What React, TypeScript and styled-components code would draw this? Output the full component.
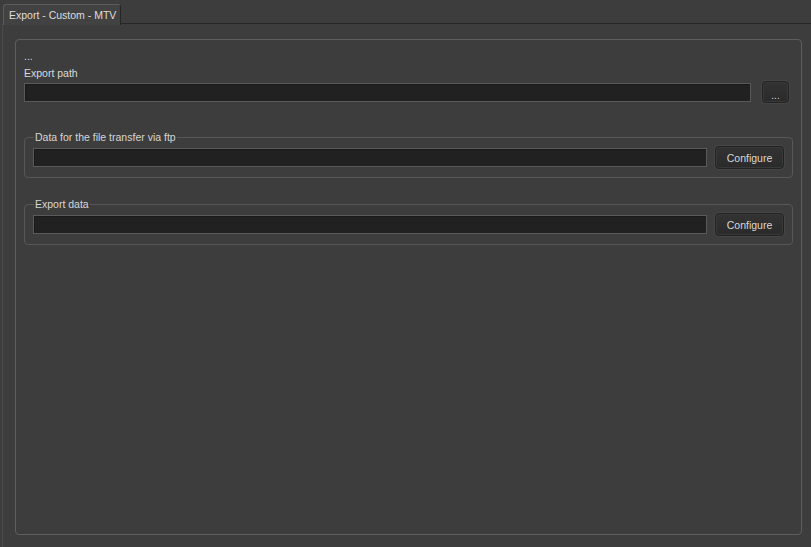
import React from "react";
import styled, { createGlobalStyle } from "styled-components";

const Global = createGlobalStyle`
  html, body { margin: 0; padding: 0; background: #3d3d3d; }
  body { font-family: "Liberation Sans", Arial, sans-serif; font-size: 10.5px; color: #d6d6d6; }
  * { box-sizing: border-box; }
`;

const Window = styled.div`
  width: 811px;
  height: 547px;
  display: flex;
  flex-direction: column;
  background: #3d3d3d;
  overflow: hidden;
`;

const TabBar = styled.div`
  height: 24px;
  display: flex;
  align-items: flex-end;
  padding-left: 3px;
  background: #3d3d3d;
`;

const Tab = styled.div`
  height: 21px;
  padding: 0 4px 0 5px;
  display: flex;
  align-items: center;
  background: #424242;
  border: 1px solid #5c5c5c;
  border-right-color: #252525;
  border-bottom: none;
  border-radius: 3px 3px 0 0;
  color: #dedede;
  font-family: "Liberation Sans", Arial, sans-serif;
  font-size: 10.5px;
  position: relative;
  z-index: 1;
  margin-bottom: -1px;
`;

const TabFill = styled.div`
  flex: 1;
  height: 1px;
  background: #262626;
  box-shadow: 0 1px 0 #4a4a4a;
`;

const Page = styled.div`
  flex: 1;
  display: flex;
  padding: 15px 9px 12px 12px;
  margin-left: 2px;
  border-left: 1px solid #4a4a4a;
  background: #3d3d3d;
`;

const Frame = styled.div`
  flex: 1;
  border: 1px solid #5e5e5e;
  border-radius: 4px;
  padding: 9px 8px 0 8px;
  display: flex;
  flex-direction: column;
`;

const Label = styled.div<{ $mt?: number }>`
  margin-top: ${(p) => p.$mt ?? 0}px;
  font-size: 10.5px;
  color: #dadada;
  line-height: 14px;
  height: 14px;
`;

const Row = styled.div<{ $gap: number; $mt?: number; $pr?: number }>`
  display: flex;
  align-items: center;
  gap: ${(p) => p.$gap}px;
  margin-top: ${(p) => p.$mt ?? 0}px;
  padding-right: ${(p) => p.$pr ?? 0}px;
`;

const Input = styled.div`
  flex: 1;
  height: 19px;
  background: #212121;
  border: 1px solid #5a5a5a;
  box-shadow: inset 1px 1px 0 #1a1a1a;
`;

const Button = styled.button<{ $w: number; $h: number }>`
  width: ${(p) => p.$w}px;
  height: ${(p) => p.$h}px;
  flex: none;
  padding: 0;
  border: 1px solid #222222;
  border-radius: 4px;
  background: linear-gradient(#333333, #2a2a2a);
  box-shadow: inset 0 0 0 1px #393939, 0 0 0 1px #464646;
  color: #d8d8d8;
  font-family: "Liberation Sans", Arial, sans-serif;
  font-size: 10.5px;
  display: flex;
  align-items: center;
  justify-content: center;
`;

const DotsText = styled.span`
  position: relative;
  top: 3px;
  font-size: 10px;
`;

const Group = styled.fieldset<{ $mt: number }>`
  margin: ${(p) => p.$mt}px 0 0 0;
  padding: 3px 8px 8px 8px;
  border: 1px solid #575757;
  border-radius: 4px;
  min-width: 0;
`;

const Legend = styled.legend`
  padding: 0 1px;
  margin-left: 1px;
  font-size: 10.5px;
  color: #d6d6d6;
  line-height: 12px;
`;

export default function App() {
  return (
    <>
      <Global />
      <Window>
        <TabBar>
          <Tab>Export - Custom - MTV</Tab>
          <TabFill />
        </TabBar>
        <Page>
          <Frame>
            <Label>...</Label>
            <Label $mt={3}>Export path</Label>
            <Row $gap={11} $mt={1} $pr={4}>
              <Input />
              <Button $w={27} $h={22}>
                <DotsText>...</DotsText>
              </Button>
            </Row>
            <Group $mt={28}>
              <Legend>Data for the file transfer via ftp</Legend>
              <Row $gap={8}>
                <Input />
                <Button $w={69} $h={23}>Configure</Button>
              </Row>
            </Group>
            <Group $mt={20}>
              <Legend>Export data</Legend>
              <Row $gap={8}>
                <Input />
                <Button $w={69} $h={23}>Configure</Button>
              </Row>
            </Group>
          </Frame>
        </Page>
      </Window>
    </>
  );
}
